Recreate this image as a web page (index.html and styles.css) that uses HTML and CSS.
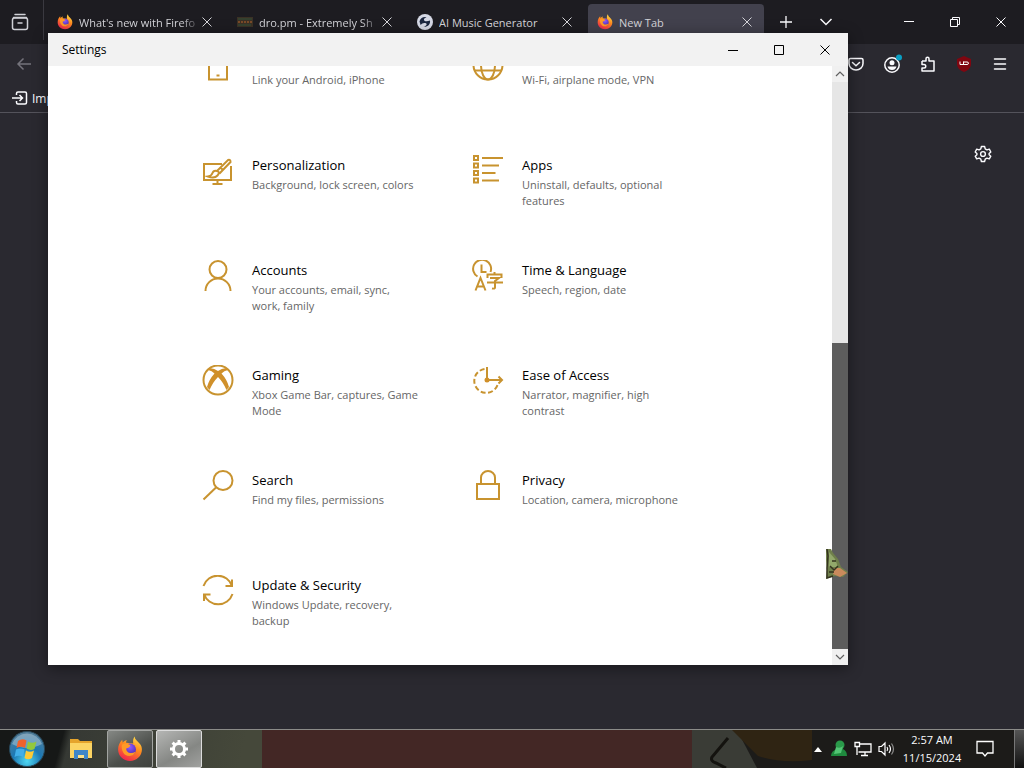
FILE: index.html
```
<!DOCTYPE html>
<html lang="en">
<head>
<meta charset="utf-8">
<title>Settings</title>
<meta name="viewport" content="width=device-width, initial-scale=1">
<link rel="stylesheet" href="styles.css">
</head>
<body>
<svg class="defs" aria-hidden="true">
  <defs>
    <linearGradient id="flame" x1="0.8" y1="0" x2="0.3" y2="1">
      <stop offset="0" stop-color="#ffe14a"/><stop offset="0.45" stop-color="#ff8a1e"/><stop offset="1" stop-color="#f0234f"/>
    </linearGradient>
    <radialGradient id="globe" cx="0.5" cy="0.3" r="0.7">
      <stop offset="0" stop-color="#9059ff"/><stop offset="1" stop-color="#4a2bb0"/>
    </radialGradient>
    <radialGradient id="orb" cx="0.5" cy="0.85" r="0.9">
      <stop offset="0" stop-color="#4fd8f2"/><stop offset="0.45" stop-color="#1c78b4"/><stop offset="1" stop-color="#5d7f94"/>
    </radialGradient>
    <symbol id="firefox" viewBox="0 0 24 24">
      <path fill="url(#flame)" d="M12 23C5.800 23 1 18.400 1 12.500 1 8.500 2.600 5.500 4.800 3.400L5.300 6.200C6.300 5 7.400 4.200 9 3.800 8.500 4.700 8.300 5.500 8.400 6.200L15 7C14.600 4.500 14.800 2.500 16.200.5 16.600 3.500 19 5 20.600 6.600 22.400 8.400 23 10.400 23 12.500 23 18.400 18.200 23 12 23Z"/>
      <circle cx="12" cy="12.500" r="5.500" fill="url(#globe)"/>
      <path fill="#ff9a26" d="M4.500 8C7 6.300 10 7 12.500 8.800L11 10.600 8.500 11.500C8.500 15.500 13 17 17 14.500 15.500 18.500 11 19.500 8 17.500 5 15.500 4 11.500 4.500 8Z"/>
    </symbol>
    <symbol id="x" viewBox="0 0 12 12"><path d="M1.500 1.500 10.500 10.500M10.500 1.500 1.500 10.500" fill="none" stroke="currentColor"/></symbol>
  </defs>
</svg>

<div class="desktop">
  <main class="browser">
    <header class="tabbar">
      <button class="view" aria-label="Firefox View">
        <svg width="18" height="18" viewBox="0 0 18 18" fill="none" stroke="currentColor" stroke-width="1.500" stroke-linecap="round"><path d="M4 1.500H14M2.500 4.500H15.500M7 10H11"/><rect x="1.500" y="5" width="15" height="11.500" rx="2"/></svg>
      </button>
      <nav class="tabs">
        <div class="tab">
          <svg class="fav"><use href="#firefox"/></svg>
          <span class="label fade">What's new with Firefo</span>
          <button class="close" aria-label="Close tab"><svg width="12" height="12"><use href="#x"/></svg></button>
        </div>
        <div class="tab">
          <svg class="fav" viewBox="0 0 16 16"><rect y="3" width="16" height="10" fill="#3b3125"/><path d="M1 5H15M1 11H14" stroke="#31513a"/><path d="M1 8H15" stroke="#7a4a28" stroke-width="2" stroke-dasharray="2 1"/></svg>
          <span class="label fade">dro.pm - Extremely Sh</span>
          <button class="close" aria-label="Close tab"><svg width="12" height="12"><use href="#x"/></svg></button>
        </div>
        <div class="tab">
          <svg class="fav" viewBox="0 0 16 16"><circle cx="8" cy="8" r="8" fill="#d6d9e6"/><path d="M2.500 7.500C3 4.500 6 2.500 9.500 3.200 7 4.200 6.200 5.800 7.500 6.800 9 7.800 11 7.200 13 6.500 13.500 10 11 13.200 6.500 12.800 9.500 12 10.500 10.200 9 9.300 7 8.300 5 9.300 3.600 11Z" fill="#1c2740"/></svg>
          <span class="label">AI Music Generator</span>
          <button class="close" aria-label="Close tab"><svg width="12" height="12"><use href="#x"/></svg></button>
        </div>
        <div class="tab active">
          <svg class="fav"><use href="#firefox"/></svg>
          <span class="label">New Tab</span>
          <button class="close" aria-label="Close tab"><svg width="12" height="12"><use href="#x"/></svg></button>
        </div>
      </nav>
      <div class="tabtools">
        <button aria-label="New tab"><svg width="14" height="14" viewBox="0 0 14 14" stroke="currentColor" stroke-width="1.300"><path d="M7 1V13M1 7H13"/></svg></button>
        <button aria-label="List all tabs"><svg width="14" height="14" viewBox="0 0 14 14" fill="none" stroke="currentColor" stroke-width="1.500"><path d="M1.500 4 7 9.500 12.500 4"/></svg></button>
      </div>
      <div class="caption">
        <button aria-label="Minimize"><svg width="12" height="12" viewBox="0 0 12 12" stroke="currentColor"><path d="M1 5.500H11"/></svg></button>
        <button aria-label="Restore"><svg width="12" height="12" viewBox="0 0 12 12" fill="none" stroke="currentColor"><path d="M1.500 3.500H8.500V10.500H1.500ZM3.500 3.500V1.500H10.500V8.500H8.500"/></svg></button>
        <button aria-label="Close"><svg width="12" height="12"><use href="#x"/></svg></button>
      </div>
    </header>
    <div class="toolbar">
      <button class="back" aria-label="Back"><svg width="16" height="16" viewBox="0 0 16 16" fill="none" stroke="currentColor" stroke-width="1.500"><path d="M15 8H2M7.500 2.500 2 8 7.500 13.500"/></svg></button>
      <div class="tools">
        <button aria-label="Save to Pocket"><svg width="16" height="16" viewBox="0 0 16 16" fill="none" stroke="currentColor" stroke-width="1.500" stroke-linecap="round"><path d="M2.500 2.500H13.500Q15 2.500 15 4V7.500A7 6.500 0 0 1 1 7.500V4Q1 2.500 2.500 2.500ZM4.500 6.500 8 9.700 11.500 6.500"/></svg></button>
        <button aria-label="Account"><svg width="20" height="20" viewBox="0 0 20 20"><circle cx="10" cy="11" r="7.200" fill="none" stroke="currentColor" stroke-width="1.500"/><circle cx="10" cy="8.700" r="2.500" fill="currentColor"/><path d="M5.500 12.500H14.500Q13.500 16 10 16T5.500 12.500Z" fill="currentColor"/><circle cx="17" cy="3.500" r="3" fill="#0a9fc4"/></svg></button>
        <button aria-label="Extensions"><svg width="16" height="16" viewBox="0 0 16 16" fill="none" stroke="currentColor" stroke-width="1.500" stroke-linejoin="round"><path d="M2 5H6V2.800A1.500 1.500 0 0 1 9 2.800V5H14V15H2V12H4A1.500 1.500 0 0 0 4 8.500H2V5"/></svg></button>
        <button aria-label="uBlock Origin"><svg width="16" height="16" viewBox="0 0 16 16"><path d="M8 0 15 3V9Q14 14 8 16 2 14 1 9V3Z" fill="#800610"/><path d="M4 5.500V8.500H7.500V5.500M7.500 9V6H11Q12.500 6 12.500 7.200T11 8.500H7.500" fill="none" stroke="#fff"/></svg></button>
        <button aria-label="Menu"><svg width="16" height="16" viewBox="0 0 16 16" stroke="currentColor" stroke-width="1.500" stroke-linecap="round"><path d="M2.500 3H13.500M2.500 8H13.500M2.500 13H13.500"/></svg></button>
      </div>
    </div>
    <div class="bookmarks">
      <svg width="16" height="16" viewBox="0 0 16 16" fill="none" stroke="currentColor" stroke-width="1.500"><path d="M4.500 5V3.500Q4.500 2 6 2H13Q14.500 2 14.500 3.500V12.500Q14.500 14 13 14H6Q4.500 14 4.500 12.500V11M0 8H10M7.500 5 10.500 8 7.500 11"/></svg>
      <a href="#">Imp</a>
    </div>
    <div class="page">
      <button class="gear" aria-label="Personalize new tab"><svg width="18" height="18" viewBox="0 0 18 18" fill="none" stroke="currentColor" stroke-width="1.400" stroke-linejoin="round"><path d="M7.400 1.500H10.600L11.200 3.900 12.900 4.900 15.300 4.200 16.800 7 15.100 8.600V9.800L16.800 11.200 15.300 13.900 12.900 13.200 11.200 14.200 10.600 16.500H7.400L6.800 14.200 5.100 13.200 2.700 13.900 1.200 11.200 2.900 9.800V8.600L1.200 7 2.700 4.200 5.100 4.900 6.800 3.900Z"/><circle cx="9" cy="9" r="2.400"/></svg></button>
    </div>
  </main>

  <section class="window">
    <header class="titlebar">
      <h1>Settings</h1>
      <div class="winctl">
        <button aria-label="Minimize"><svg width="12" height="12" viewBox="0 0 12 12" stroke="currentColor"><path d="M1 6.500H11"/></svg></button>
        <button aria-label="Maximize"><svg width="12" height="12" viewBox="0 0 12 12" fill="none" stroke="currentColor"><path d="M1.500 1.500H10.500V10.500H1.500Z"/></svg></button>
        <button aria-label="Close"><svg width="12" height="12"><use href="#x"/></svg></button>
      </div>
    </header>
    <div class="body">
      <div class="content">
        <div class="grid">
          <a class="tile cut" href="#">
            <svg class="icon" viewBox="0 17 32 15"><path d="M7 0V30.500H25V0"/><path d="M14.500 26.500H17.500" stroke-width="2"/></svg>
            <span class="text"><span class="desc">Link your Android, iPhone</span></span>
          </a>
          <a class="tile cut" href="#">
            <svg class="icon" viewBox="0 17 32 15"><circle cx="16" cy="16" r="14.500"/><ellipse cx="16" cy="16" rx="7" ry="14.500"/><path d="M2.500 21.500H29.500"/></svg>
            <span class="text"><span class="desc">Wi-Fi, airplane mode, VPN</span></span>
          </a>
          <a class="tile" href="#">
            <svg class="icon" viewBox="0 0 32 32"><path d="M20 9H2V25H29V11M10.500 29H20.500M15.500 25V29M6 21.500Q9.500 21 10.500 18T15 16 15.500 20.500 6 21.500ZM15 16 26 5Q28.500 4 28.500 7L17.500 18.500M18.500 12.500 21 15"/></svg>
            <span class="text"><strong>Personalization</strong><span class="desc">Background, lock screen, colors</span></span>
          </a>
          <a class="tile" href="#">
            <svg class="icon" viewBox="0 0 32 32"><path d="M2 1H6V5H2ZM2 8.500H6V12.500H2ZM2 16H6V20H2ZM2 23.500H6V27.500H2Z"/><path d="M10 3H31M10 10.500H27M10 18H23.500M10 25.500H27"/></svg>
            <span class="text"><strong>Apps</strong><span class="desc">Uninstall, defaults, optional features</span></span>
          </a>
          <a class="tile" href="#">
            <svg class="icon" viewBox="0 0 32 32"><circle cx="16" cy="9.500" r="8.500"/><path d="M3.500 31A12.500 12.500 0 0 1 28.500 31"/></svg>
            <span class="text"><strong>Accounts</strong><span class="desc">Your accounts, email, sync,<br>work, family</span></span>
          </a>
          <a class="tile" href="#">
            <svg class="icon" viewBox="0 0 32 32"><path d="M5.500 16.500A9 9 0 1 1 18.500 12"/><path d="M9.500 4.500V12H14.500"/><path d="M3.500 30.500 8.500 18 13.500 30.500M5 26.500H12"/><path d="M15.500 18V14.500H29.500V18M22.500 12V14.500M18 18H27L23 21V27.500Q23 29 20 28.500M15 22.500H31"/></svg>
            <span class="text"><strong>Time &amp; Language</strong><span class="desc">Speech, region, date</span></span>
          </a>
          <a class="tile" href="#">
            <svg class="icon" viewBox="0 0 32 32"><circle cx="16" cy="15" r="14.500"/><path class="solid" d="M7 3.500Q11 2.500 16 6 21 2.500 25 3.500L26 5Q22 5.500 19.500 8.500 25 14.500 27 22L24.500 25Q21 17 16 12 11 17 7.500 25L5 22Q7 14.500 12.500 8.500 10 5.500 6 5Z"/></svg>
            <span class="text"><strong>Gaming</strong><span class="desc">Xbox Game Bar, captures, Game Mode</span></span>
          </a>
          <a class="tile" href="#">
            <svg class="icon" viewBox="0 0 32 32"><path d="M12.500 4A12 12 0 1 0 26 18.500" stroke-dasharray="5 2.500"/><path d="M15 2V15H29M26.500 11.500 30 15 26.500 18.500"/><circle class="solid" cx="15" cy="15" r="2.500"/></svg>
            <span class="text"><strong>Ease of Access</strong><span class="desc">Narrator, magnifier, high<br>contrast</span></span>
          </a>
          <a class="tile" href="#">
            <svg class="icon" viewBox="0 0 32 32"><circle cx="21" cy="10.500" r="9.500"/><path d="M14 17.500 1.500 29.500"/></svg>
            <span class="text"><strong>Search</strong><span class="desc">Find my files, permissions</span></span>
          </a>
          <a class="tile" href="#">
            <svg class="icon" viewBox="0 0 32 32"><path d="M5 14H27V29H5ZM9 14V7.500A7 6.500 0 0 1 23 7.500V14"/></svg>
            <span class="text"><strong>Privacy</strong><span class="desc">Location, camera, microphone</span></span>
          </a>
          <a class="tile" href="#">
            <svg class="icon" viewBox="0 0 32 32"><path d="M1.500 11A15 15 0 0 1 30 11M30 4.500V11H23.500M30.500 19A15 15 0 0 1 2 19M2 26V19.500H8.500"/></svg>
            <span class="text"><strong>Update &amp; Security</strong><span class="desc">Windows Update, recovery, backup</span></span>
          </a>
        </div>
      </div>
      <div class="scroll">
        <button aria-label="Scroll up"><svg width="10" height="10" viewBox="0 0 10 10"><path d="M1 7 5 3 9 7"/></svg></button>
        <div class="track"><div class="thumb"></div></div>
        <button aria-label="Scroll down"><svg width="10" height="10" viewBox="0 0 10 10"><path d="M1 3 5 7 9 3"/></svg></button>
      </div>
    </div>
    <svg class="pointer" viewBox="0 0 24 32"><path d="M1 1H6L8 5 13 11 16 19 23 24 18 29 10 28 1 31 2 22 1 12Z" fill="#6f7f4b"/><path d="M4 4 10 11 13 19H4Z" fill="#93a86b"/><path d="M9 20 15 20 22 25 15 29 8 26Z" fill="#c98a5c"/><path d="M2 1 3 8 2 20 2 30 8 28M5 18 9 22 13 18M4 24H9M7 13H11" stroke="#34331f" stroke-width="1.500" fill="none"/></svg>
  </section>

  <footer class="taskbar">
    <button class="start" aria-label="Start"><svg width="38" height="38" viewBox="0 0 38 38"><circle cx="19" cy="19" r="17.500" fill="url(#orb)" stroke="#28485a"/><path d="M4 14A16 16 0 0 1 34 14Q19 22 4 14Z" fill="#fff" opacity=".3"/><path d="M10 11Q14 8 18.500 10.500L17 18Q13 15.500 8.500 18Z" fill="#f0622d"/><path d="M20 11.500Q24 14 28.500 11.500L26.500 19Q22.500 21 18.500 18.500Z" fill="#93c83d"/><path d="M8 19.500Q12.500 17.500 16.600 19.500L15 27Q11 24.500 6.500 27Z" fill="#42aee8"/><path d="M18 20.500Q22 23 26 20.500L24 28Q20 30.500 16.500 28Z" fill="#fdca35"/></svg></button>
    <button class="task" aria-label="File Explorer"><svg width="24" height="22" viewBox="0 0 24 22"><path d="M1 1H9L11 3H23V20H1Z" fill="#e5a42c"/><path d="M1 5H23V20H1Z" fill="#fbd464"/><path d="M5 12H19V21H15V17H9V21H5Z" fill="#3f86c8"/><path d="M9 17H15V20H9Z" fill="#fbe08a"/></svg></button>
    <button class="task open" aria-label="Firefox"><svg width="26" height="26"><use href="#firefox"/></svg></button>
    <button class="task open current" aria-label="Settings"><svg width="20" height="20" viewBox="0 0 20 20"><circle cx="10" cy="10" r="5.500" fill="none" stroke="#fff" stroke-width="3"/><path d="M10 1V4M10 16V19M1 10H4M16 10H19M3.600 3.600 5.700 5.700M14.300 14.300 16.400 16.400M3.600 16.400 5.700 14.300M14.300 5.700 16.400 3.600" stroke="#fff" stroke-width="3"/></svg></button>
    <div class="wallpaper">
      <svg viewBox="0 0 120 38" preserveAspectRatio="none" aria-hidden="true"><path d="M0 0H45L65 38H0Z" fill="#3a3c36"/><path d="M40 0H120V30Q90 34 66 26Z" fill="#2f2413"/><path d="M36 8 20 27Q18 31 24 33L34 38" fill="none" stroke="#14130f" stroke-width="3"/></svg>
    </div>
    <div class="tray">
      <button aria-label="Show hidden icons"><svg width="8" height="5" viewBox="0 0 8 5"><path d="M0 5 4 0 8 5Z" fill="#fff"/></svg></button>
      <svg width="18" height="18" viewBox="0 0 18 18"><circle cx="10" cy="5" r="4.500" fill="#2a9a4a"/><path d="M1 16Q1 11 7 9H13Q17 11 17 16Z" fill="#1f8a3e"/><path d="M6 7Q10 9 13 6L11 13 4 14Z" fill="#53c474"/></svg>
      <svg width="18" height="16" viewBox="0 0 18 16" fill="none" stroke="#fff" stroke-width="1.300"><path d="M6 3H17V11H4.500M11 11V14.500M7 14.500H14M1 1.500H5.500V5.500H1ZM3 5.500V14"/></svg>
      <svg width="18" height="16" viewBox="0 0 18 16" fill="none" stroke="#fff" stroke-width="1.200"><path d="M1 5.500H3.500L7 2V14L3.500 10.500H1ZM9 6Q10.500 8 9 10M11 4Q14 8 11 12"/><path d="M13.500 2.500Q17.500 8 13.500 13.500" opacity=".5"/></svg>
      <time class="clock"><span>2:57 AM</span><span>11/15/2024</span></time>
      <button class="notice" aria-label="Notifications"><svg width="18" height="18" viewBox="0 0 18 18" fill="none" stroke="#fff" stroke-width="1.300"><path d="M1 1.500H17V13H11.500L9 16 6.500 13H1Z"/></svg></button>
      <button class="peek" aria-label="Show desktop"></button>
    </div>
  </footer>
</div>
</body>
</html>
```
FILE: styles.css
```
* { box-sizing: border-box; }

body {
  margin: 0;
  font-family: "Open Sans", "Noto Sans", sans-serif;
  font-size: 12px;
  color: #fbfbfe;
  background: #2a2930;
}

button {
  display: flex;
  align-items: center;
  justify-content: center;
  margin: 0;
  padding: 0;
  border: 0;
  background: none;
  color: inherit;
  font: inherit;
}

svg { display: block; flex: none; }
a { color: inherit; text-decoration: none; }
.defs { position: absolute; width: 0; height: 0; }

.desktop {
  position: relative;
  display: flex;
  flex-direction: column;
  height: 100vh;
  overflow: hidden;
}

.browser { flex: 1; display: flex; flex-direction: column; min-height: 0; }

/* tab strip */
.tabbar {
  display: flex;
  height: 44px;
  background: #1d1c21;
}

.view { width: 44px; border-right: 1px solid #3a3940; height: 40px; padding-right: 4px; padding-top: 4px; color: #d0d0d6; }
.tabs { display: flex; gap: 4px; padding: 4px 0; margin-left: 4px; }

.tab {
  display: flex;
  align-items: center;
  width: 176px;
  padding: 0 11px 0 9px;
  border-radius: 4px;
  font-size: 11px;
  color: #d4d4d9;
}

.tab.active { background: #42414d; }
.fav { width: 16px; height: 16px; margin-right: 6px; }
.label { flex: 1; overflow: hidden; white-space: nowrap; }
.fade { mask-image: linear-gradient(90deg, #000 84%, transparent); }

.tabtools { display: flex; padding-left: 2px; }
.tabtools button { width: 40px; }
.caption { display: flex; margin-left: auto; }
.caption button { width: 46px; }

/* navigation */
.toolbar {
  display: flex;
  align-items: center;
  justify-content: space-between;
  height: 40px;
  padding: 0 6px 0 4px;
}

.back { width: 40px; color: #74737b; }
.tools { display: flex; }
.tools button { width: 36px; }

.bookmarks {
  display: flex;
  align-items: center;
  gap: 4px;
  height: 29px;
  padding-left: 12px;
  border-bottom: 1px solid #54535b;
}

.page { flex: 1; display: flex; justify-content: flex-end; align-items: flex-start; padding: 32px 32px 0; }

/* settings window, floating above the browser */
.window {
  position: absolute;
  left: 48px;
  top: 33px;
  width: 800px;
  height: 632px;
  display: flex;
  flex-direction: column;
  background: #fff;
  color: #000;
  box-shadow: 0 3px 14px rgba(0, 0, 0, .45);
}

.titlebar {
  display: flex;
  justify-content: space-between;
  height: 33px;
  padding-left: 14px;
  background: #f2f2f2;
}

.titlebar h1 { margin: 0; font-size: 12px; font-weight: 400; line-height: 33px; }
.winctl { display: flex; }
.winctl button { width: 46px; }
.body { flex: 1; display: flex; min-height: 0; }
.content { flex: 1; }

.grid {
  display: grid;
  grid-template-columns: 1fr 1fr;
  grid-template-rows: 89px;
  grid-auto-rows: 105px;
  width: 604px;
  margin: 0 auto;
  padding-left: 64px;
}

.tile { display: flex; gap: 18px; align-items: flex-start; }
.text { display: flex; flex-direction: column; gap: 2px; width: 174px; }
.text strong { font-size: 13px; font-weight: 400; line-height: 20px; }
.desc { font-size: 11px; line-height: 16px; color: #666; }
.cut .desc { padding-top: 6px; }

.icon {
  width: 32px;
  height: 32px;
  fill: none;
  stroke: #c8932f;
  stroke-width: 2;
}

.cut .icon { height: 15px; }
.icon .solid { fill: #d0902a; stroke: none; }

.scroll { display: flex; flex-direction: column; width: 16px; background: #e6e6e6; }
.scroll button { height: 16px; background: #f0f0f0; }
.scroll path { fill: none; stroke: #606060; stroke-width: 1.2; }
.track { flex: 1; display: flex; flex-direction: column; justify-content: flex-end; }
.thumb { height: 54%; background: #5d5d5d; }

.pointer { position: absolute; right: -1px; bottom: 84px; width: 24px; height: 34px; }

/* taskbar */
.taskbar {
  display: flex;
  height: 39px;
  border-top: 1px solid #8b8b88;
  background: linear-gradient(105deg, #161817 62px, #363934 70px, #45483a 240px) no-repeat 0 0 / 262px 100%, #1c1b19;
}

.start { width: 54px; }
.task { width: 46px; margin-right: 3px; border-radius: 2px; }
.start + .task { margin-left: 4px; }
.open { border: 1px solid #a3a5a2; background: linear-gradient(150deg, #858884, #4c4f4b 60%, #3f423e); }
.current { border-color: #dcdcdc; background: linear-gradient(150deg, #b5b6b4, #858784 60%, #a0a19f); }

.wallpaper {
  flex: 1;
  display: flex;
  justify-content: flex-end;
  margin-left: 57px;
  background: #432725;
}

.wallpaper svg { width: 120px; height: 38px; background: #1c1b19; }

.tray { display: flex; align-items: center; gap: 6px; }
.tray > button:first-child { width: 12px; }

.clock {
  display: flex;
  flex-direction: column;
  align-items: center;
  width: 60px;
  line-height: 18px;
  font-size: 11px;
}

.notice { width: 34px; }
.peek { width: 10px; margin-left: 6px; align-self: stretch; border-left: 1px solid #777; background: linear-gradient(#555, #111); }
```
